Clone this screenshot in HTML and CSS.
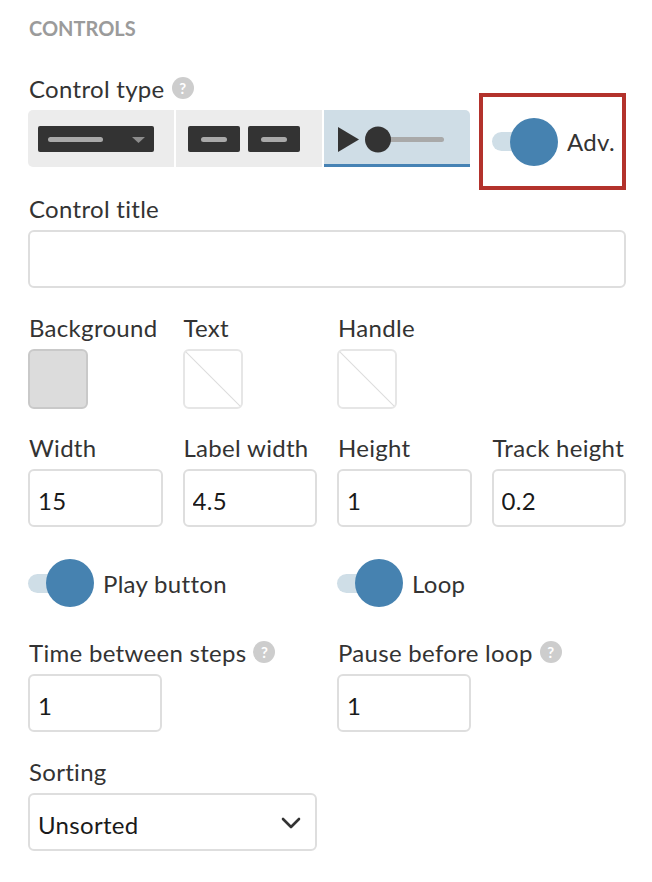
FILE: index.html
```html
<!DOCTYPE html>
<html>
<head>
<meta charset="utf-8">
<link rel="stylesheet" href="styles.css">
</head>
<body>
<div class="panel">
  <h2 class="section-title">CONTROLS</h2>

  <div class="type-row">
    <div class="type-col">
      <label class="lbl">Control type <span class="help">?</span></label>
      <div class="segmented">
        <button class="seg">
          <svg width="146" height="57" viewBox="0 0 146 57">
            <rect x="10" y="16" width="116" height="26" rx="2" fill="#333"/>
            <rect x="20" y="27" width="55" height="5" rx="2.5" fill="#a9a9a9"/>
            <polygon points="104,27 117,27 110.5,33" fill="#8c8c8c"/>
          </svg>
        </button>
        <button class="seg">
          <svg width="146" height="57" viewBox="0 0 146 57">
            <rect x="12" y="16" width="52" height="26" rx="2" fill="#333"/>
            <rect x="72" y="16" width="52" height="26" rx="2" fill="#333"/>
            <rect x="25" y="27" width="26" height="5" rx="2.5" fill="#a9a9a9"/>
            <rect x="85" y="27" width="26" height="5" rx="2.5" fill="#a9a9a9"/>
          </svg>
        </button>
        <button class="seg active">
          <svg width="146" height="54" viewBox="0 0 146 54">
            <polygon points="14,17 35,29.5 14,42" fill="#333"/>
            <rect x="60" y="27" width="60" height="5" rx="2.5" fill="#a9a9a9"/>
            <circle cx="54" cy="29.5" r="13" fill="#333"/>
          </svg>
        </button>
      </div>
    </div>
    <div class="adv-box">
      <div class="toggle">
        <span class="track"></span><span class="knob"></span>
        <span class="toggle-text">Adv.</span>
      </div>
    </div>
  </div>

  <div class="field">
    <label class="lbl">Control title</label>
    <input class="text-input" type="text" value="">
  </div>

  <div class="grid4 swatches">
    <div>
      <label class="lbl">Background</label>
      <div class="swatch filled"></div>
    </div>
    <div>
      <label class="lbl">Text</label>
      <div class="swatch empty"></div>
    </div>
    <div>
      <label class="lbl">Handle</label>
      <div class="swatch empty"></div>
    </div>
  </div>

  <div class="grid4 sizes">
    <div>
      <label class="lbl">Width</label>
      <input class="text-input" type="text" value="15">
    </div>
    <div>
      <label class="lbl">Label width</label>
      <input class="text-input" type="text" value="4.5">
    </div>
    <div>
      <label class="lbl">Height</label>
      <input class="text-input" type="text" value="1">
    </div>
    <div>
      <label class="lbl">Track height</label>
      <input class="text-input" type="text" value="0.2">
    </div>
  </div>

  <div class="grid4 toggles">
    <div class="span2">
      <div class="toggle">
        <span class="track"></span><span class="knob"></span>
        <span class="toggle-text">Play button</span>
      </div>
    </div>
    <div class="span2">
      <div class="toggle">
        <span class="track"></span><span class="knob"></span>
        <span class="toggle-text">Loop</span>
      </div>
    </div>
  </div>

  <div class="grid4 timing">
    <div class="span2">
      <label class="lbl">Time between steps <span class="help">?</span></label>
      <input class="text-input small" type="text" value="1">
    </div>
    <div class="span2">
      <label class="lbl">Pause before loop <span class="help">?</span></label>
      <input class="text-input small" type="text" value="1">
    </div>
  </div>

  <div class="grid4 sorting">
    <div class="span2">
      <label class="lbl">Sorting</label>
      <div class="select">
        <span>Unsorted</span>
        <svg width="20" height="12" viewBox="0 0 20 12"><polyline points="2,2 10,10 18,2" fill="none" stroke="#333" stroke-width="2.6" stroke-linecap="round" stroke-linejoin="round"/></svg>
      </div>
    </div>
  </div>
</div>
</body>
</html>
```

FILE: styles.css
```css
* { box-sizing: border-box; }
html, body { margin: 0; padding: 0; background: #fff; }
body {
  font-family: Lato, "Open Sans", "Liberation Sans", sans-serif;
  color: #333;
}
.panel {
  width: 652px;
  padding: 16px 26px 0 28px;
}
.section-title {
  margin: 0;
  font-size: 20px;
  line-height: 24px;
  font-weight: 700;
  color: #9b9b9b;
  letter-spacing: 0;
  padding-left: 1px;
}
.lbl {
  display: flex;
  align-items: center;
  gap: 7px;
  font-size: 24px;
  letter-spacing: 0.3px;
  line-height: 30px;
  height: 30px;
  margin-bottom: 6px;
  padding-left: 1px;
  color: #333;
  white-space: nowrap;
}
.help {
  display: inline-flex;
  align-items: center;
  justify-content: center;
  width: 22px;
  height: 22px;
  border-radius: 50%;
  background: #cdcdcd;
  color: #fff;
  font-size: 15px;
  font-weight: 700;
  letter-spacing: 0;
  line-height: 1;
  margin-top: -2px;
}
.type-row {
  display: flex;
  align-items: flex-start;
  justify-content: space-between;
  margin-top: 34px;
}
.segmented {
  display: flex;
  gap: 2px;
}
.seg {
  width: 146px;
  height: 57px;
  padding: 0;
  margin: 0;
  border: 0;
  background: #ececec;
  display: flex;
  align-items: flex-start;
}
.seg svg { display: block; }
.seg:first-child { border-radius: 5px 0 0 5px; }
.seg:last-child { border-radius: 0 5px 0 0; }
.seg.active {
  background: #cfdde6;
  border-bottom: 3px solid #4682b4;
}
.adv-box {
  width: 147px;
  height: 97px;
  margin-top: 19px;
  border: 4px solid #b3322c;
  display: flex;
  align-items: center;
  padding-left: 9px;
}
.toggle {
  display: flex;
  align-items: center;
  height: 48px;
}
.track {
  width: 38px;
  height: 19px;
  border-radius: 10px;
  background: #cfdee7;
  flex: none;
}
.knob {
  width: 48px;
  height: 48px;
  border-radius: 50%;
  background: #4682b0;
  margin-left: -20px;
  flex: none;
}
.toggle-text {
  font-size: 24px;
  letter-spacing: 0.3px;
  margin-left: 9px;
  color: #333;
}
.field { margin-top: 4px; }
.text-input {
  display: block;
  width: 100%;
  height: 58px;
  border: 2px solid #dedede;
  border-radius: 6px;
  padding: 5px 0 0 8px;
  font-family: Lato, "Open Sans", "Liberation Sans", sans-serif;
  font-size: 24px;
  letter-spacing: 0.3px;
  color: #1a1a1a;
  background: #fff;
  outline: none;
}
.text-input.small { width: 134px; }
.grid4 {
  display: grid;
  grid-template-columns: repeat(4, 1fr);
  column-gap: 20px;
}
.span2 { grid-column: span 2; }
.swatches { margin-top: 25px; }
.swatch {
  width: 60px;
  height: 60px;
  border-radius: 6px;
}
.swatch.filled {
  background: #dcdcdc;
  border: 2px solid #c9c9c9;
}
.swatch.empty {
  background: linear-gradient(to top right, #fff calc(50% - 1px), #dedede 50%, #fff calc(50% + 1px));
  border: 2px solid #e6e6e6;
}
.sizes { margin-top: 24px; }
.toggles { margin-top: 32px; }
.timing { margin-top: 31px; }
.sorting { margin-top: 25px; }
.select {
  height: 58px;
  border: 2px solid #dedede;
  border-radius: 6px;
  display: flex;
  align-items: center;
  justify-content: space-between;
  padding: 5px 14px 0 8px;
  font-size: 24px;
  letter-spacing: 0.3px;
  color: #1a1a1a;
}
.select svg { display: block; margin-top: -4px; }
```
